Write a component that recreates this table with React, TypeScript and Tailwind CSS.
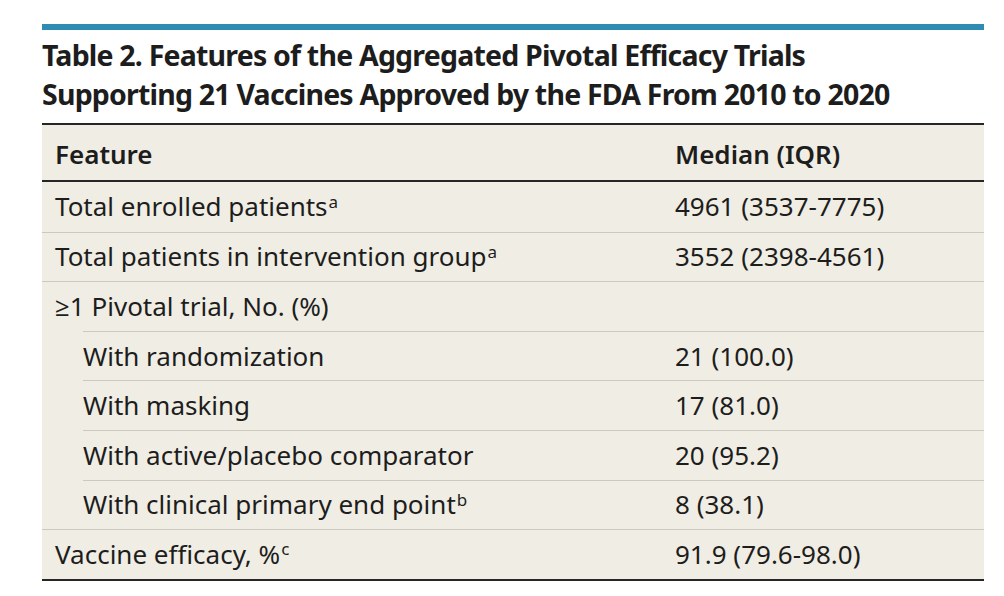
import React from "react";

type Row = { label: string; sup?: string; value: string; sub?: boolean };

const rows: Row[] = [
  { label: "Total enrolled patients", sup: "a", value: "4961 (3537-7775)" },
  { label: "Total patients in intervention group", sup: "a", value: "3552 (2398-4561)" },
  { label: "≥1 Pivotal trial, No. (%)", value: "" },
  { label: "With randomization", value: "21 (100.0)", sub: true },
  { label: "With masking", value: "17 (81.0)", sub: true },
  { label: "With active/placebo comparator", value: "20 (95.2)", sub: true },
  { label: "With clinical primary end point", sup: "b", value: "8 (38.1)", sub: true },
  { label: "Vaccine efficacy, %", sup: "c", value: "91.9 (79.6-98.0)" },
];

export default function App() {
  return (
    <div
      className="w-[1004px] h-[596px] bg-white pt-[24px] pl-[42px] pr-[20px] text-[#1d1d1d]"
      style={{ fontFamily: '"Noto Sans", "Open Sans", sans-serif' }}
    >
      <div className="h-[6px] bg-[#2e8bb1]" />
      <h1 className="mt-[6px] text-[28.5px] leading-[39px] font-bold tracking-[-0.8px]">
        Table 2. Features of the Aggregated Pivotal Efficacy Trials
        <br />
        Supporting 21 Vaccines Approved by the FDA From 2010 to 2020
      </h1>
      <div className="mt-[9px] bg-[#f0ede4] border-t-2 border-b-2 border-[#262626]">
        <div className="h-[57px] flex items-end pb-[6px] border-b-2 border-[#262626] text-[26px] font-semibold">
          <div className="w-[620px] pl-[13px]">Feature</div>
          <div className="pl-[13px]">Median (IQR)</div>
        </div>
        {rows.map((r, i) => (
          <div key={i} className={r.sub ? "pl-[41px]" : ""}>
            <div
              className={
                "h-[49.6px] flex items-center text-[26px] " +
                (i === 0 ? "" : "border-t border-[#cdc9c0]")
              }
            >
              <div className={(r.sub ? "w-[579px]" : "w-[620px] pl-[13px]") + " whitespace-nowrap"}>
                {r.label}
                {r.sup && <sup className="text-[17px] ml-[1px]">{r.sup}</sup>}
              </div>
              <div className="pl-[13px] whitespace-nowrap">{r.value}</div>
            </div>
          </div>
        ))}
      </div>
    </div>
  );
}
